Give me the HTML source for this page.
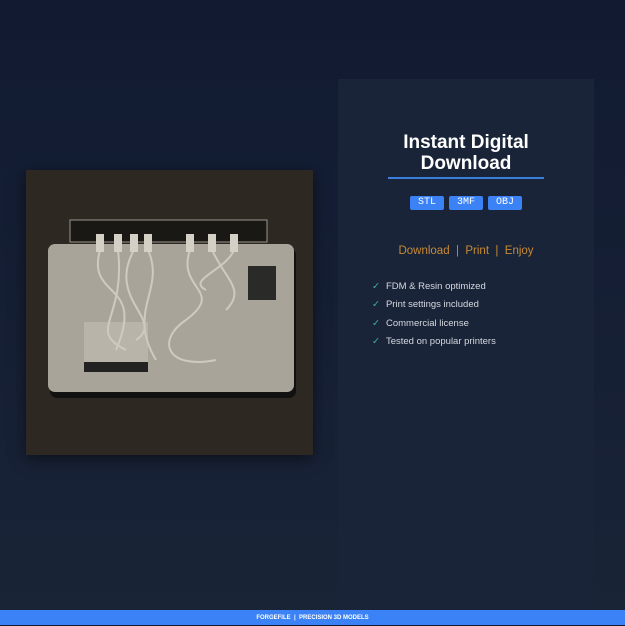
<!DOCTYPE html>
<html><head><style>
body{margin:0;width:625px;height:625px;overflow:hidden;background:linear-gradient(#111a31,#1a2437);font-family:"Liberation Sans",sans-serif;position:relative}
.panel{position:absolute;left:338px;top:79px;width:256px;height:531px;background:#1a2438}
h1{position:absolute;left:338px;width:256px;top:132px;margin:0;text-align:center;color:#fff;font-size:19px;line-height:21px;font-weight:bold}
.line{position:absolute;left:388px;top:177px;width:156px;height:2px;background:#3b7fdc}
.tags{position:absolute;top:196px;left:410px;display:flex;gap:5px}
.tags span{background:#3b82f6;color:#fff;font-family:"Liberation Mono",monospace;font-size:10px;width:34px;height:14px;line-height:14px;text-align:center;border-radius:2px}
.dl{position:absolute;left:338px;width:256px;top:245px;text-align:center;color:#c78a35;font-size:11.5px}
ul{position:absolute;left:372px;top:281px;margin:0;padding:0;list-style:none;color:#d5d9e0;font-size:9.5px}
ul li{height:18.3px}
ul li b{color:#3fb5a0;font-weight:normal;margin-right:6px}
.img{position:absolute;left:26px;top:170px;width:287px;height:285px;background:#2d2922;box-shadow:0 4px 14px rgba(0,0,0,.5)}
.foot{position:absolute;left:0;top:610px;width:625px;height:15px;background:#3b82f6;color:#fff;font-size:6px;font-weight:bold;text-align:center;line-height:16px}
</style></head><body>
<div class="panel"></div>
<h1>Instant Digital<br>Download</h1>
<div class="line"></div>
<div class="tags"><span>STL</span><span>3MF</span><span>OBJ</span></div>
<div class="dl">Download &nbsp;|&nbsp; Print &nbsp;|&nbsp; Enjoy</div>
<ul><li><b>✓</b>FDM &amp; Resin optimized</li><li><b>✓</b>Print settings included</li><li><b>✓</b>Commercial license</li><li><b>✓</b>Tested on popular printers</li></ul>
<div class="img"><svg width="287" height="285">
<rect x="44" y="50" width="197" height="22" fill="#1a1814" stroke="#9a958c"/>
<rect x="24" y="78" width="246" height="150" rx="7" fill="#111"/>
<rect x="22" y="74" width="246" height="148" rx="7" fill="#a9a49a"/>
<rect x="58" y="152" width="64" height="48" fill="#b9b4aa"/><rect x="58" y="192" width="64" height="10" fill="#222"/>
<rect x="222" y="96" width="28" height="34" fill="#2a2a28"/>
<g stroke="#cfcac0" stroke-width="2" fill="none">
<path d="M74 80 C60 130 120 110 90 180"/><path d="M92 80 C100 150 60 160 100 180"/><path d="M108 80 C80 130 140 150 110 170"/><path d="M122 80 C140 120 100 140 130 190"/><path d="M164 80 C150 120 200 120 160 150 C130 170 140 200 190 190"/><path d="M186 80 C200 110 220 120 200 140"/><path d="M208 80 C200 100 160 110 180 120"/></g>
<g fill="#d5d0c6"><rect x="70" y="64" width="8" height="18"/><rect x="88" y="64" width="8" height="18"/><rect x="104" y="64" width="8" height="18"/><rect x="118" y="64" width="8" height="18"/><rect x="160" y="64" width="8" height="18"/><rect x="182" y="64" width="8" height="18"/><rect x="204" y="64" width="8" height="18"/></g>
</svg></div>
<div class="foot">FORGEFILE &nbsp;|&nbsp; PRECISION 3D MODELS</div>
</body></html>
